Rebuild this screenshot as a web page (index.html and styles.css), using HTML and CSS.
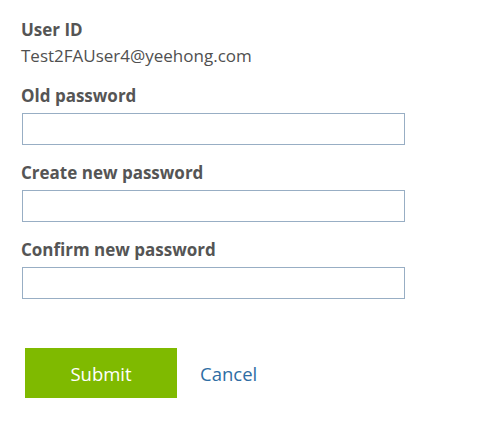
FILE: index.html
```html
<!DOCTYPE html>
<html>
<head>
<meta charset="utf-8">
<link rel="stylesheet" href="styles.css">
</head>
<body>
<form class="form">
  <div class="field">
    <div class="label">User ID</div>
    <div class="value">Test2FAUser4@yeehong.com</div>
  </div>
  <div class="field">
    <label class="label">Old password</label>
    <input class="input" type="password">
  </div>
  <div class="field">
    <label class="label">Create new password</label>
    <input class="input" type="password">
  </div>
  <div class="field">
    <label class="label">Confirm new password</label>
    <input class="input" type="password">
  </div>
  <div class="actions">
    <button class="submit" type="button">Submit</button>
    <a class="cancel" href="#">Cancel</a>
  </div>
</form>
</body>
</html>
```

FILE: styles.css
```css
html, body {
  margin: 0;
  padding: 0;
  background: #fff;
}
body {
  font-family: "Open Sans", "Noto Sans", sans-serif;
  color: #505050;
}
.form {
  padding: 18px 0 0 21px;
  display: flex;
  flex-direction: column;
}
.field {
  display: flex;
  flex-direction: column;
}
.label {
  font-size: 17px;
  font-weight: 700;
  line-height: 22px;
  padding-top: 1px;
  color: #555;
}
.value {
  font-size: 17px;
  line-height: 22px;
  margin-top: 4px;
  margin-bottom: 17px;
  color: #505050;
}
.input {
  box-sizing: border-box;
  width: 383px;
  height: 32px;
  margin: 6px 0 16px 1px;
  border: 1px solid #98aec4;
  background: #fff;
  padding: 0 8px;
  font-size: 15px;
  outline: none;
}
.actions {
  display: flex;
  align-items: center;
  margin-top: 33px;
  padding-left: 4px;
}
.submit {
  width: 152px;
  height: 50px;
  background: #7fba00;
  border: none;
  color: #fff;
  font-family: inherit;
  font-size: 18.5px;
  padding: 0;
}
.cancel {
  margin-left: 23px;
  font-size: 18.5px;
  color: #2e6da4;
  text-decoration: none;
}
```
